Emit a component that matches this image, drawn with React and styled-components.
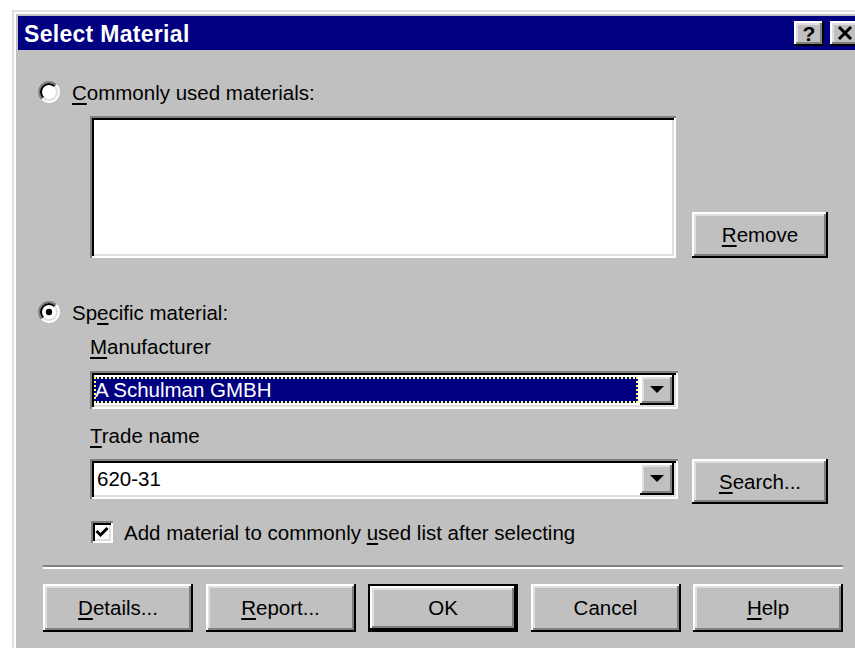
import React from "react"
import styled, { createGlobalStyle, css } from "styled-components"

const GlobalStyle = createGlobalStyle`
  html, body {
    margin: 0;
    padding: 0;
    background: #ffffff;
    overflow: hidden;
  }
  body {
    font-family: "Liberation Sans", Arial, sans-serif;
    font-size: 20.5px;
    color: #000000;
  }
`

const raised = css`
  background: #c0c0c0;
  box-shadow:
    inset -2px -2px #000000,
    inset 2px 2px #ffffff,
    inset -4px -4px #808080,
    inset 4px 4px #dfdfdf;
`

const sunken = css`
  box-shadow:
    inset 2px 2px #808080,
    inset -2px -2px #ffffff,
    inset 4px 4px #000000,
    inset -4px -4px #dfdfdf;
`

const Window = styled.div`
  box-sizing: border-box;
  width: 856px;
  height: 700px;
  margin: 10px 0 0 12px;
  padding: 6px 4px 0 6px;
  background: #c0c0c0;
  box-shadow: inset 2px 2px #dfdfdf, inset 4px 4px #ffffff;
`

const TitleBar = styled.div`
  height: 34px;
  background: #000080;
  display: flex;
  align-items: center;
  justify-content: space-between;
  padding: 0 4px 0 6px;
`

const Title = styled.span`
  color: #ffffff;
  font-weight: bold;
  font-size: 23px;
  letter-spacing: 0.3px;
  padding-top: 2px;
`

const CaptionButtons = styled.div`
  display: flex;
  gap: 6px;
`

const CaptionButton = styled.div`
  ${raised};
  width: 30px;
  height: 25px;
  display: flex;
  align-items: center;
  justify-content: center;
  font-weight: bold;
  font-size: 21px;
  line-height: 1;
`

const Body = styled.div`
  padding: 30px 0 0 19px;
`

const OptionRow = styled.div`
  display: flex;
  align-items: center;
  height: 24px;
  margin-top: ${(p) => p.$top || 0}px;
  gap: 11px;
`

const Text = styled.span`
  white-space: nowrap;
  padding-top: 2px;
`

const Key = styled.span`
  text-decoration: underline;
  text-decoration-thickness: 2px;
  text-underline-offset: 3px;
`

const ListRow = styled.div`
  display: flex;
  align-items: flex-end;
  gap: 16px;
  margin: 12px 0 0 53px;
`

const ListBox = styled.div`
  ${sunken};
  background: #ffffff;
  width: 586px;
  height: 142px;
`

const Indent = styled.div`
  margin-left: 53px;
`

const FieldLabel = styled.div`
  height: 24px;
  line-height: 24px;
  margin-top: ${(p) => p.$top || 0}px;
`

const ComboRow = styled.div`
  display: flex;
  align-items: flex-start;
  gap: 14px;
  margin-top: ${(p) => p.$top || 0}px;
`

const Combo = styled.div`
  ${sunken};
  background: #ffffff;
  box-sizing: border-box;
  width: 588px;
  height: ${(p) => p.$height}px;
  padding: 4px;
  display: flex;
`

const ComboValue = styled.div`
  flex: 1;
  display: flex;
  align-items: center;
  padding: 2px 2px 2px 0;
`

const ValueText = styled.div`
  flex: 1;
  align-self: stretch;
  display: flex;
  align-items: center;
  padding-left: ${(p) => (p.$selected ? 1 : 3)}px;
  ${(p) =>
    p.$selected &&
    css`
      background: #000080;
      color: #ffffff;
      outline: 2px dotted #ffff80;
      outline-offset: -2px;
    `}
`

const DropButton = styled.div`
  ${raised};
  width: 34px;
  display: flex;
  align-items: center;
  justify-content: center;
`

const Button = styled.div`
  ${raised};
  box-sizing: border-box;
  width: ${(p) => p.$width || 150}px;
  height: ${(p) => p.$height || 48}px;
  display: flex;
  align-items: center;
  justify-content: center;
  white-space: nowrap;
  ${(p) =>
    p.$default &&
    css`
      box-shadow:
        inset 0 0 0 2px #000000,
        inset -4px -4px #000000,
        inset 4px 4px #ffffff,
        inset -6px -6px #808080,
        inset 6px 6px #dfdfdf;
    `}
`

const CheckRow = styled.div`
  display: flex;
  align-items: center;
  gap: 11px;
  height: 24px;
  margin: 16px 0 0 1px;
`

const CheckBox = styled.div`
  ${sunken};
  background: #ffffff;
  width: 22px;
  height: 22px;
  display: flex;
  align-items: center;
  justify-content: center;
`

const Separator = styled.div`
  width: 800px;
  height: 2px;
  margin: 21px 0 0 6px;
  background: #808080;
  border-bottom: 2px solid #ffffff;
`

const ButtonRow = styled.div`
  display: flex;
  gap: 12.5px;
  margin: 15px 0 0 6px;
`

function Radio({ checked }) {
  return (
    <svg width="24" height="24" viewBox="0 0 24 24">
      <circle cx="12" cy="12" r="9" fill="#ffffff" />
      <path d="M4.93 19.07 A10 10 0 0 1 19.07 4.93" fill="none" stroke="#808080" strokeWidth="2" />
      <path d="M19.07 4.93 A10 10 0 0 1 4.93 19.07" fill="none" stroke="#ffffff" strokeWidth="2" />
      <path d="M6.34 17.66 A8 8 0 0 1 17.66 6.34" fill="none" stroke="#000000" strokeWidth="2" />
      <path d="M17.66 6.34 A8 8 0 0 1 6.34 17.66" fill="none" stroke="#dfdfdf" strokeWidth="2" />
      {checked && <circle cx="12" cy="12" r="3.2" fill="#000000" />}
    </svg>
  )
}

const Arrow = () => (
  <svg width="14" height="8" viewBox="0 0 14 8">
    <polygon points="0,0 14,0 7,7" fill="#000000" />
  </svg>
)

const Check = () => (
  <svg width="14" height="12" viewBox="0 0 14 12">
    <polyline points="1.5,5 5.5,9 12.5,2" fill="none" stroke="#000000" strokeWidth="3" />
  </svg>
)

const CloseGlyph = () => (
  <svg width="16" height="14" viewBox="0 0 16 14">
    <path d="M2 1 L14 13 M14 1 L2 13" stroke="#000000" strokeWidth="3" />
  </svg>
)

export default function App() {
  return (
    <>
      <GlobalStyle />
      <Window>
        <TitleBar>
          <Title>Select Material</Title>
          <CaptionButtons>
            <CaptionButton>?</CaptionButton>
            <CaptionButton>
              <CloseGlyph />
            </CaptionButton>
          </CaptionButtons>
        </TitleBar>
        <Body>
          <OptionRow>
            <Radio />
            <Text>
              <Key>C</Key>ommonly used materials:
            </Text>
          </OptionRow>
          <ListRow>
            <ListBox />
            <Button $width={136} $height={46}>
              <Key>R</Key>emove
            </Button>
          </ListRow>
          <OptionRow $top={42}>
            <Radio checked />
            <Text>
              Sp<Key>e</Key>cific material:
            </Text>
          </OptionRow>
          <Indent>
            <FieldLabel $top={11}>
              <Key>M</Key>anufacturer
            </FieldLabel>
            <ComboRow $top={12}>
              <Combo $height={38}>
                <ComboValue>
                  <ValueText $selected>A Schulman GMBH</ValueText>
                </ComboValue>
                <DropButton>
                  <Arrow />
                </DropButton>
              </Combo>
            </ComboRow>
            <FieldLabel $top={15}>
              <Key>T</Key>rade name
            </FieldLabel>
            <ComboRow $top={11}>
              <Combo $height={40}>
                <ComboValue>
                  <ValueText>620-31</ValueText>
                </ComboValue>
                <DropButton>
                  <Arrow />
                </DropButton>
              </Combo>
              <Button $width={136} $height={45}>
                <Key>S</Key>earch...
              </Button>
            </ComboRow>
            <CheckRow>
              <CheckBox>
                <Check />
              </CheckBox>
              <Text>
                Add material to commonly <Key>u</Key>sed list after selecting
              </Text>
            </CheckRow>
          </Indent>
          <Separator />
          <ButtonRow>
            <Button>
              <Key>D</Key>etails...
            </Button>
            <Button>
              <Key>R</Key>eport...
            </Button>
            <Button $default>OK</Button>
            <Button>Cancel</Button>
            <Button>
              <Key>H</Key>elp
            </Button>
          </ButtonRow>
        </Body>
      </Window>
    </>
  )
}
